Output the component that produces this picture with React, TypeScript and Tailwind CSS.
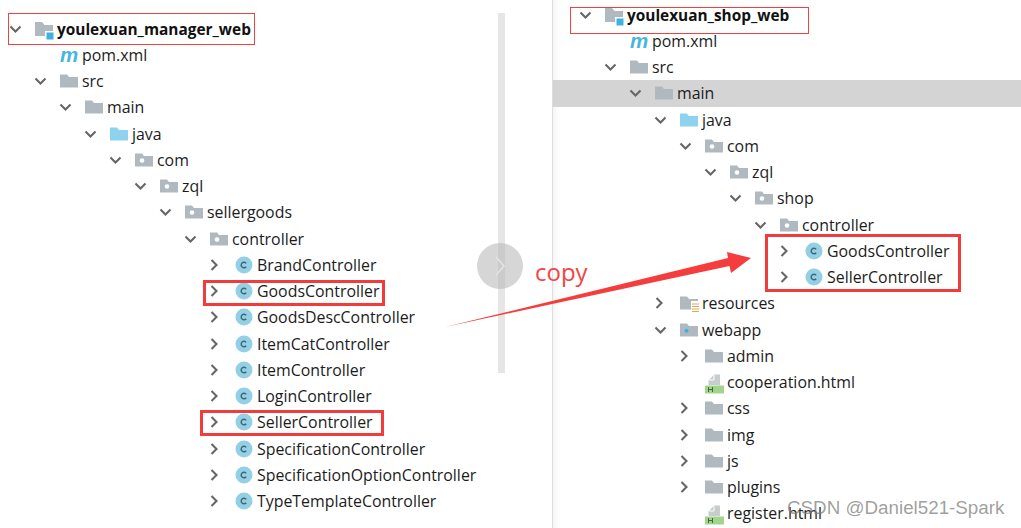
const ROW = "flex h-[26.25px] items-center whitespace-nowrap";

const PAD: Record<number, string> = {
  8: "pl-[8px]", 33: "pl-[33px]", 58: "pl-[58px]", 83: "pl-[83px]", 108: "pl-[108px]",
  133: "pl-[133px]", 158: "pl-[158px]", 183: "pl-[183px]", 208: "pl-[208px]",
};

const RPAD: Record<number, string> = {
  25: "pl-[25px]", 50: "pl-[50px]", 75: "pl-[75px]", 100: "pl-[100px]", 125: "pl-[125px]",
  150: "pl-[150px]", 175: "pl-[175px]", 200: "pl-[200px]", 225: "pl-[225px]",
};

function Chevron({ open }: { open: boolean }) {
  return (
    <svg width="14" height="14" viewBox="0 0 14 14" fill="none" stroke="#666666" strokeWidth="2.1">
      {open ? <path d="M2.5 4.5 7.500 9.500 12.500 4.500" /> : <path d="M3.500 2 8.500 7l-5 5" />}
    </svg>
  );
}

function Folder({ kind }: { kind: string }) {
  const grey = "#b0b9c0";
  return (
    <svg width="19" height="18" viewBox="0 0 19 18" className="shrink-0 overflow-visible">
      <path
        d={kind === "mod" ? "M0 2h7l2.500 3H18V16H0z" : "M0 2.500h7l2 2.500H18V15.500H0z"}
        fill={kind === "java" ? "#8fd2ee" : grey}
      />
      {kind === "pkg" && <circle cx="7" cy="9.500" r="2.300" fill="#fff" />}
      {kind === "web" && <circle cx="6.500" cy="9.800" r="2" fill="#3fb1e0" />}
      {kind === "res" && (
        <g stroke="#dba94e" strokeWidth="1.200">
          <rect x="11" y="7" width="8" height="11" fill="#fff" stroke="none" />
          <path d="M12 10h7M12 12.500h7M12 15h7M12 17.500h7" />
        </g>
      )}
      {kind === "mod" && (
        <g>
          <rect x="10" y="11" width="9" height="9" fill="#fff" />
          <rect x="11.500" y="12.500" width="7" height="7" fill="#3fb1e0" />
        </g>
      )}
    </svg>
  );
}

function ClassIcon() {
  return (
    <svg width="19" height="18" viewBox="0 0 19 18" className="shrink-0 overflow-visible">
      <circle cx="9" cy="9" r="8.500" fill="#93d0e6" />
      <path d="M11.200 7.300A2.800 2.800 0 1 0 11.200 10.700" fill="none" stroke="#3f6675" strokeWidth="1.400" />
    </svg>
  );
}

function Icon({ kind }: { kind: string }) {
  if (kind === "class") return <ClassIcon />;
  if (kind === "pom")
    return (
      <span className="w-[18px] shrink-0 text-center font-['Liberation_Sans',sans-serif] text-[20.500px] leading-[18px] font-bold italic text-[#49b5df]">
        m
      </span>
    );
  if (kind === "html")
    return (
      <svg width="19" height="20" viewBox="0 -2 19 20" className="shrink-0 overflow-visible">
        <path d="M3.500 11V6.500L9 0.500h6V11z" fill="#c9cccd" />
        <path d="M9 1v5H4" fill="none" stroke="#fff" strokeWidth="1" />
        <rect x="0" y="11.500" width="19" height="8" fill="#a2d48e" />
        <path d="M3.500 13v5M7.500 13v5M3.500 15.500h4" stroke="#3b6b33" strokeWidth="1" fill="none" />
      </svg>
    );
  return <Folder kind={kind} />;
}

type Item = [number, "open" | "closed" | "none", string, string, boolean?];

const left: Item[] = [
  [8, "open", "mod", "youlexuan_manager_web", true],
  [33, "none", "pom", "pom.xml"],
  [33, "open", "folder", "src"],
  [58, "open", "folder", "main"],
  [83, "open", "java", "java"],
  [108, "open", "pkg", "com"],
  [133, "open", "pkg", "zql"],
  [158, "open", "pkg", "sellergoods"],
  [183, "open", "pkg", "controller"],
  [208, "closed", "class", "BrandController"],
  [208, "closed", "class", "GoodsController"],
  [208, "closed", "class", "GoodsDescController"],
  [208, "closed", "class", "ItemCatController"],
  [208, "closed", "class", "ItemController"],
  [208, "closed", "class", "LoginController"],
  [208, "closed", "class", "SellerController"],
  [208, "closed", "class", "SpecificationController"],
  [208, "closed", "class", "SpecificationOptionController"],
  [208, "closed", "class", "TypeTemplateController"],
];

const right: Item[] = [
  [25, "open", "mod", "youlexuan_shop_web", true],
  [50, "none", "pom", "pom.xml"],
  [50, "open", "folder", "src"],
  [75, "open", "folder", "main"],
  [100, "open", "java", "java"],
  [125, "open", "pkg", "com"],
  [150, "open", "pkg", "zql"],
  [175, "open", "pkg", "shop"],
  [200, "open", "pkg", "controller"],
  [225, "closed", "class", "GoodsController"],
  [225, "closed", "class", "SellerController"],
  [100, "closed", "res", "resources"],
  [100, "open", "web", "webapp"],
  [125, "closed", "folder", "admin"],
  [125, "none", "html", "cooperation.html"],
  [125, "closed", "folder", "css"],
  [125, "closed", "folder", "img"],
  [125, "closed", "folder", "js"],
  [125, "closed", "folder", "plugins"],
  [125, "none", "html", "register.html"],
];

function Row({ item, pad, selected }: { item: Item; pad: string; selected?: boolean }) {
  const [, state, kind, label, bold] = item;
  return (
    <div className={`${ROW} ${pad} ${selected ? "bg-[#d4d4d4]" : ""}`}>
      <span className="flex w-[14px] shrink-0 justify-center">
        {state !== "none" && <Chevron open={state === "open"} />}
      </span>
      <span className="ml-[13px] flex w-[22px] shrink-0">
        <Icon kind={kind} />
      </span>
      <span className={bold ? "pt-[2px] text-[15.400px] font-bold text-[#111]" : "pt-[2px] text-[15.900px] text-[#1c1c1c]"}>{label}</span>
    </div>
  );
}

export default function App() {
  return (
    <div className="relative h-[528px] w-[1021px] overflow-hidden bg-white font-['Open_Sans',sans-serif]">
      <div className="flex h-full">
        <div className="flex h-full w-[553px] shrink-0 border-r border-[#dedede]">
          <div className="h-full w-[498px] shrink-0 pt-[15.500px]">
            {left.map((it) => (
              <Row key={it[3]} item={it} pad={PAD[it[0]]} />
            ))}
          </div>
          <div className="mt-[13px] h-[360px] w-[7px] bg-[#e6e6e6]" />
        </div>
        <div className="h-full flex-1 bg-[linear-gradient(to_right,#f5f5f5,#ffffff_7px)] pt-[1.500px]">
          {right.map((it) => (
            <Row key={it[3]} item={it} pad={RPAD[it[0]]} selected={it[3] === "main"} />
          ))}
        </div>
      </div>

      {/* scroll hint */}
      <div className="absolute top-[243px] left-[477px] flex h-[46px] w-[46px] items-center justify-center rounded-full bg-[#b4b4b4]/55">
        <svg width="14" height="22" viewBox="0 0 14 22" fill="none" stroke="#e4e4e4" strokeWidth="1.500">
          <path d="M3 2l8 9-8 9" />
        </svg>
      </div>

      {/* red annotations */}
      <div className="absolute top-[13px] left-[8px] h-[32px] w-[247px] border border-[#f04040]" />
      <div className="absolute top-[7px] left-[570px] h-[27px] w-[239px] border border-[#f04040]" />
      <div className="absolute top-[280px] left-[203px] h-[26px] w-[182px] border-[3px] border-[#f23b3b]" />
      <div className="absolute top-[410px] left-[200px] h-[26px] w-[184px] border-[3px] border-[#f23b3b]" />
      <div className="absolute top-[234px] left-[765px] h-[58px] w-[196px] border-[3px] border-[#f23b3b]" />
      <div className="absolute top-[254px] left-[535px] text-[24px] leading-[36px] text-[#f44444]">copy</div>
      <svg className="absolute top-0 left-0" width="1021" height="528" viewBox="0 0 1021 528">
        <path d="M445 327 728 258 727 252 751 258 731 273 729.500 266z" fill="#f53d3d" />
      </svg>

      {/* watermark */}
      <div className="absolute top-[497px] left-[787px] font-['Liberation_Sans',sans-serif] text-[18.800px] leading-[22px] text-[#808080]/75">
        CSDN @Daniel521-Spark
      </div>
    </div>
  );
}
